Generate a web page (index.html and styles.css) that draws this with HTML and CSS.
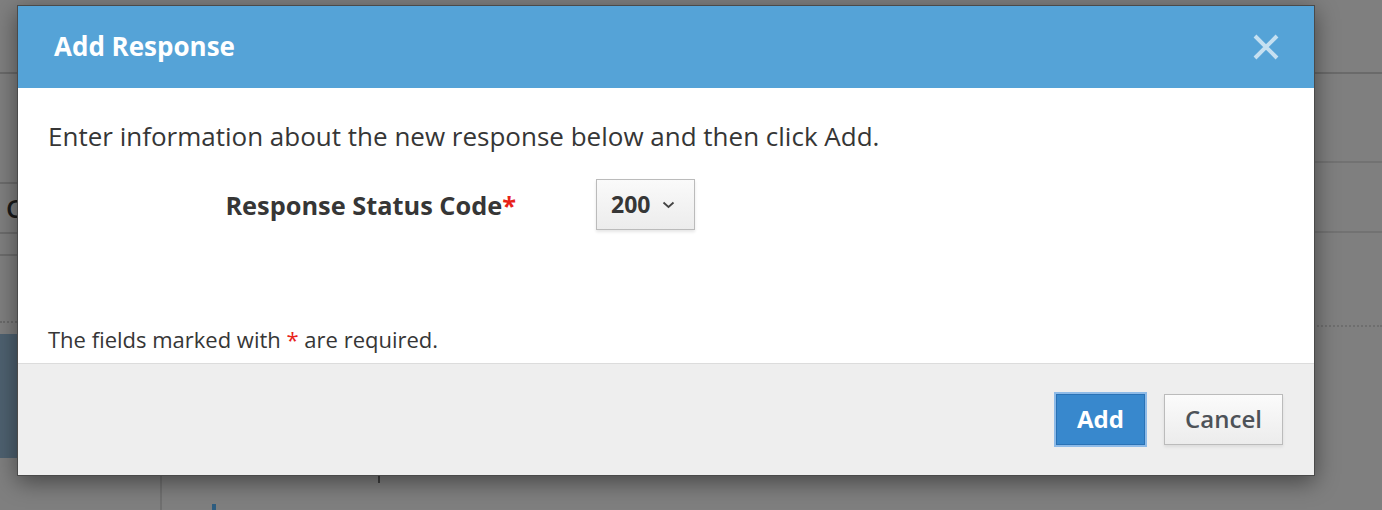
FILE: index.html
```html
<!DOCTYPE html>
<html lang="en">
<head>
<meta charset="utf-8">
<title>Add Response</title>
<link rel="stylesheet" href="styles.css">
</head>
<body>
<div class="page">
  <div class="topbar"></div>
  <div class="content">
    <div class="sidebar">
      <div class="side-gap"></div>
      <div class="side-row side-row-title">Co</div>
      <div class="side-row side-row-small"></div>
      <div class="side-row side-row-dotted"></div>
      <div class="side-active"></div>
    </div>
    <div class="main">
      <div class="main-gap"></div>
      <div class="main-row"></div>
      <div class="main-row main-row-dotted"></div>
      <div class="main-tail">
        <span class="tick"></span>
        <span class="blue-mark"></span>
      </div>
    </div>
  </div>
</div>

<div class="modal" role="dialog" aria-labelledby="modal-title">
  <div class="modal-header">
    <h4 id="modal-title" class="modal-title">Add Response</h4>
    <button class="close" aria-label="Close">
      <svg width="26" height="26" viewBox="0 0 26 26" aria-hidden="true">
        <path d="M2 2 L24 24 M24 2 L2 24" stroke="currentColor" stroke-width="4" stroke-linecap="butt" fill="none"/>
      </svg>
    </button>
  </div>
  <div class="modal-body">
    <p class="intro">Enter information about the new response below and then click Add.</p>
    <div class="form-row">
      <label class="form-label">Response Status Code<span class="req">*</span></label>
      <div class="select-btn">
        <span>200</span>
        <svg width="13" height="8" viewBox="0 0 13 8" aria-hidden="true">
          <path d="M1.5 1.5 L6.5 6 L11.5 1.5" stroke="#444" stroke-width="1.8" fill="none"/>
        </svg>
      </div>
    </div>
    <p class="note">The fields marked with <span class="req">*</span> are required.</p>
  </div>
  <div class="modal-footer">
    <button class="btn btn-primary">Add</button>
    <button class="btn btn-default">Cancel</button>
  </div>
</div>
</body>
</html>
```

FILE: styles.css
```css
* { box-sizing: border-box; }

html, body {
  margin: 0;
  padding: 0;
  height: 100%;
}

body {
  background: #7f7f7f;
  font-family: "Open Sans", "Noto Sans", "Liberation Sans", sans-serif;
  color: #363636;
  overflow: hidden;
  position: relative;
}

/* ---------- dimmed page behind the dialog ---------- */
.page {
  height: 510px;
  display: flex;
  flex-direction: column;
}

.topbar {
  height: 74px;
  border-bottom: 2px solid #6a6a6a;
  flex: none;
}

.content {
  flex: 1;
  display: flex;
}

.sidebar {
  width: 162px;
  border-right: 2px solid #707070;
  display: flex;
  flex-direction: column;
}

.side-gap {
  height: 110px;
  border-bottom: 2px solid #6c6c6c;
}

.side-row-title {
  height: 50px;
  border-bottom: 2px solid #6c6c6c;
  font-size: 26px;
  font-weight: 600;
  color: #1a1a1a;
  padding: 6px 0 0 6px;
}

.side-row-small {
  height: 22px;
  border-bottom: 2px solid #6c6c6c;
}

.side-row-dotted {
  height: 67px;
  border-bottom: 2px dotted #6a6a6a;
}

.side-active {
  margin-top: 11px;
  height: 124px;
  background: #4e6170;
}

.main {
  flex: 1;
  display: flex;
  flex-direction: column;
}

.main-gap {
  height: 89px;
  border-bottom: 2px solid #727272;
}

.main-row {
  height: 70px;
  border-bottom: 2px solid #727272;
}

.main-row-dotted {
  height: 94px;
  border-bottom: 2px dotted #6e6e6e;
}

.main-tail {
  flex: 1;
  position: relative;
}

.tick {
  position: absolute;
  left: 216px;
  top: 148px;
  width: 2px;
  height: 8px;
  background: #3e3e3e;
}

.blue-mark {
  position: absolute;
  left: 50px;
  top: 177px;
  width: 4px;
  height: 6px;
  background: #2e5d80;
}

/* ---------- dialog ---------- */
.modal {
  position: absolute;
  left: 17px;
  top: 5px;
  width: 1298px;
  height: 471px;
  background: #fff;
  border: 1px solid #4a4a4a;
  box-shadow: 0 6px 22px rgba(0, 0, 0, 0.45);
  display: flex;
  flex-direction: column;
}

.modal-header {
  height: 82px;
  background: #55a3d7;
  display: flex;
  align-items: center;
  justify-content: space-between;
  padding: 0 35px 0 36px;
  flex: none;
}

.modal-title {
  margin: 0;
  color: #fff;
  font-size: 26px;
  font-weight: 700;
  line-height: 1;
  padding-bottom: 2px;
}

.close {
  border: 0;
  background: none;
  padding: 0;
  color: rgba(255, 255, 255, 0.66);
  display: flex;
  cursor: pointer;
}

.modal-body {
  flex: 1;
  padding: 29px 30px 0 30px;
  display: flex;
  flex-direction: column;
  border-bottom: 1px solid #dcdcdc;
}

.intro {
  margin: 0;
  font-size: 26px;
  line-height: 38px;
  color: #363636;
}

.form-row {
  display: flex;
  align-items: center;
  margin-top: 24px;
}

.form-label {
  width: 468px;
  text-align: right;
  font-size: 25.35px;
  font-weight: 700;
  color: #363636;
}

.req {
  color: #e8231a;
}

.select-btn {
  margin-left: 80px;
  width: 99px;
  height: 51px;
  border: 1px solid #bbb;
  background: linear-gradient(#fafafa, #ececec);
  box-shadow: 0 2px 3px rgba(0, 0, 0, 0.1);
  display: flex;
  align-items: center;
  padding: 0 0 0 14px;
  gap: 12px;
  font-size: 23px;
  font-weight: 700;
  color: #363636;
}

.select-btn span {
  padding-bottom: 2px;
}

.note {
  margin: auto 0 0 0;
  padding-bottom: 10px;
  font-size: 22px;
  line-height: 28px;
  color: #363636;
}

.note .req {
  font-weight: 400;
}

.modal-footer {
  height: 111px;
  flex: none;
  background: #eeeeee;
  display: flex;
  align-items: center;
  justify-content: flex-end;
  padding: 0 31px 0 0;
  gap: 19px;
}

.btn {
  height: 51px;
  font-family: inherit;
  font-size: 24px;
  font-weight: 700;
  padding: 0 0 3px 0;
  cursor: pointer;
}

.btn-primary {
  width: 89px;
  background: #3888cd;
  border: 1px solid #2a72b5;
  color: #fff;
  box-shadow: 0 0 0 2px rgba(110, 170, 230, 0.75);
}

.btn-default {
  width: 119px;
  background: linear-gradient(#fbfbfb, #ececec);
  border: 1px solid #bbb;
  color: #4d5258;
  font-weight: 600;
  box-shadow: 0 2px 3px rgba(0, 0, 0, 0.08);
}
```
